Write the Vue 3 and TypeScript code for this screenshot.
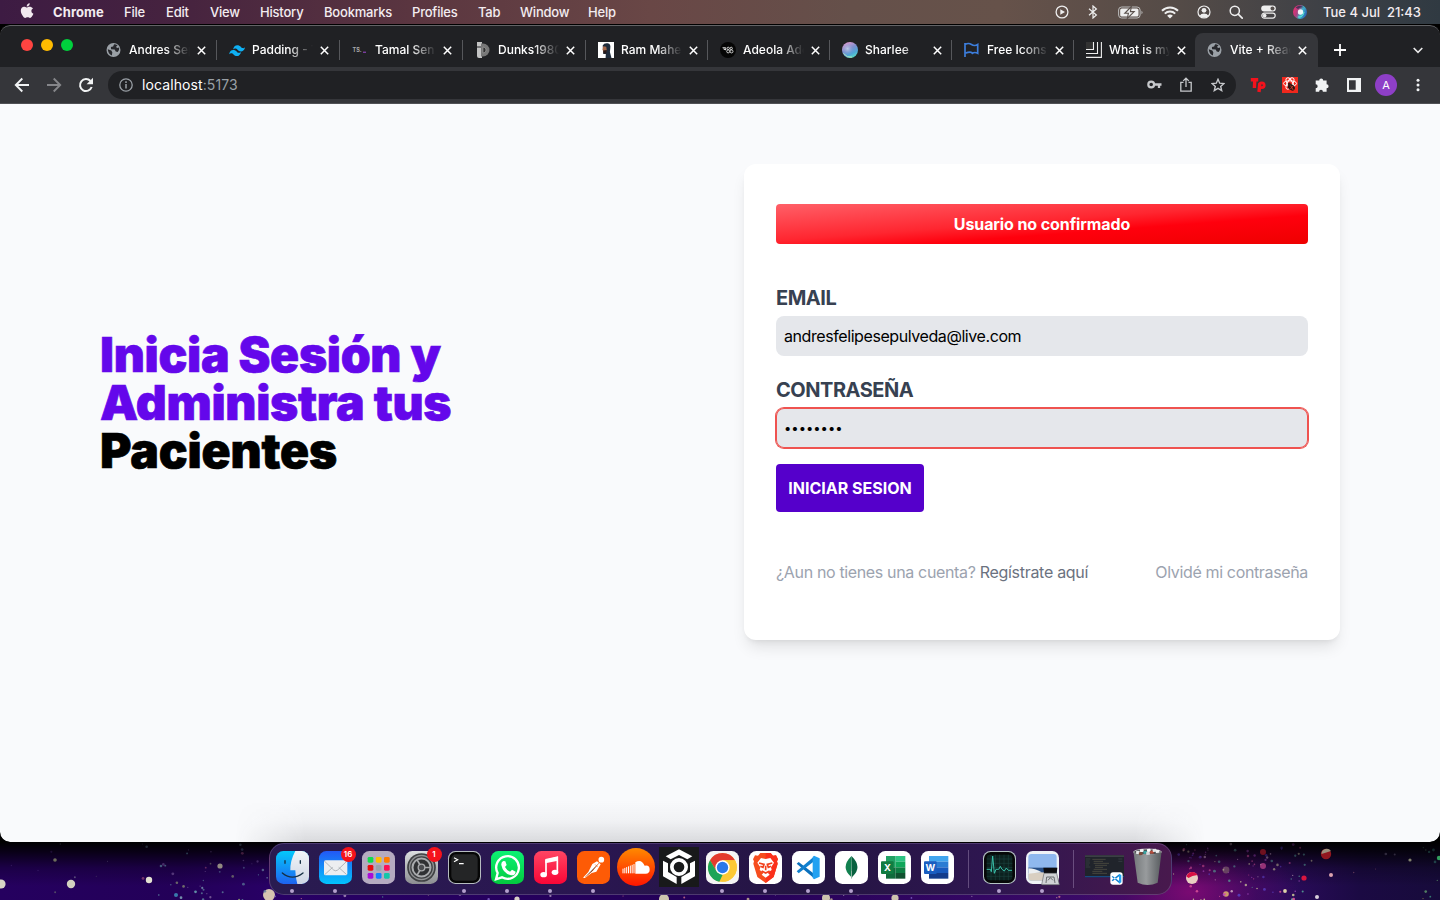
<script setup lang="ts">
import { ref } from 'vue'

interface MenuEntry { label: string; width: number }
interface BrowserTab { title: string; icon: string; width: number }
interface Speck { x: number; y: number; r: number; c: string; o: number }

const menus: MenuEntry[] = [
  { label: 'File', width: 42 },
  { label: 'Edit', width: 44 },
  { label: 'View', width: 50 },
  { label: 'History', width: 64 },
  { label: 'Bookmarks', width: 88 },
  { label: 'Profiles', width: 66 },
  { label: 'Tab', width: 42 },
  { label: 'Window', width: 68 },
  { label: 'Help', width: 40 },
]

const tabs: BrowserTab[] = [
  { title: 'Andres Sepulveda', icon: 'globe', width: 123 },
  { title: 'Padding - Tailwind', icon: 'tailwind', width: 123 },
  { title: 'Tamal Sen', icon: 'ts', width: 123 },
  { title: 'Dunks1980', icon: 'dunks', width: 123 },
  { title: 'Ram Maheshwari', icon: 'ram', width: 122 },
  { title: 'Adeola Adeoti', icon: 'adeola', width: 122 },
  { title: 'Sharlee', icon: 'orb', width: 122 },
  { title: 'Free Icons', icon: 'flag', width: 122 },
  { title: 'What is my', icon: 'lines', width: 122 },
  { title: 'Vite + React', icon: 'globe', width: 123 },
]
const activeTab = 9

const email = ref('andresfelipesepulveda@live.com')
const password = ref('12345678')

const big: Speck[] = [
  { x: 1, y: 42, r: 4.6, c: '#d8d6c6', o: 1 },
  { x: 71, y: 42, r: 4.2, c: '#d3d2c0', o: 1 },
  { x: 149, y: 38, r: 3.2, c: '#e4e2d2', o: 1 },
  { x: 269, y: 53, r: 6, c: '#d5c3b0', o: 1 },
  { x: 220, y: 24, r: 2.6, c: '#a09a88', o: 0.9 },
  { x: 55, y: 18, r: 1.8, c: '#77785f', o: 0.9 },
  { x: 176, y: 53, r: 2, c: '#3c87b5', o: 0.9 },
  { x: 1192, y: 36, r: 6, c: '#e9cfc2', o: 1 },
  { x: 1326, y: 12, r: 5.2, c: '#a11a20', o: 0.9 },
  { x: 1263, y: 10, r: 3, c: '#7a1320', o: 0.9 },
  { x: 1263, y: 24, r: 3, c: '#b03d85', o: 0.8 },
  { x: 1226, y: 28, r: 3.4, c: '#6b4a63', o: 0.9 },
  { x: 1226, y: 52, r: 2.8, c: '#d7ad6a', o: 0.9 },
  { x: 1304, y: 36, r: 2.6, c: '#d9163f', o: 1 },
  { x: 1331, y: 33, r: 2, c: '#dba3ae', o: 1 },
  { x: 1317, y: 55, r: 2, c: '#d9cfdb', o: 1 },
  { x: 1285, y: 49, r: 1.9, c: '#ddd2a8', o: 1 },
  { x: 1410, y: 18, r: 1.6, c: '#80806c', o: 1 },
  { x: 1439, y: 16, r: 2.2, c: '#2f9f5e', o: 1 },
  { x: 664, y: 57, r: 5, c: '#cdc6ae', o: 1 },
  { x: 826, y: 56, r: 4, c: '#cdc3ae', o: 1 },
  { x: 895, y: 56, r: 3.6, c: '#cdc3ae', o: 1 },
  { x: 517, y: 57, r: 2.6, c: '#d8cfc8', o: 1 },
]

let seed = 11
const rnd = (): number => {
  seed = (seed * 16807) % 2147483647
  return seed / 2147483647
}
const scatter = (n: number, x0: number, x1: number, palette: string[]): Speck[] =>
  Array.from({ length: n }, () => {
    const y = 2 + rnd() * 56
    return {
      x: x0 + rnd() * (x1 - x0),
      y,
      r: 0.5 + rnd() * 0.95,
      c: palette[Math.floor(rnd() * palette.length)],
      o: Math.min(1, 0.2 + (y / 58) * 0.7),
    }
  })
const specks: Speck[] = [
  ...big,
  ...scatter(8, 0, 135, ['#7b7892', '#5d5a6a', '#4a2a78']),
  ...scatter(45, 140, 268, ['#7fa3b8', '#5b7a99', '#8a9270', '#7a5c9a', '#a8527a', '#6fb0b8']),
  ...scatter(150, 270, 1170, ['#a58bb8', '#c06a8a', '#55a09a', '#7c5cc0', '#b8a58f']),
  ...scatter(100, 1168, 1312, ['#d7b7c9', '#e0569a', '#5bb09c', '#a84ac0', '#cfcf98', '#5a3fc0']),
  ...scatter(4, 1330, 1420, ['#7a7088', '#8e5a70']),
  ...scatter(10, 1420, 1440, ['#5f9a6a', '#8c7a4a', '#3a8a7a']),
]

const scBars = [0, 1, 2, 3, 4, 5, 6]
const padColors = ['#0fdc50', '#ffbf00', '#ff7a00', '#e90c0c', '#9ba3aa', '#fb0f55', '#a80cd8', '#1383ff', '#14c7a8']
const binScraps = [
  { x: 14, y: 8, c: '#e8e8ea' }, { x: 26, y: 3, c: '#f4f4f4' }, { x: 36, y: 9, c: '#3aa3a0' },
  { x: 47, y: 4, c: '#ffffff' }, { x: 56, y: 10, c: '#b54a3a' }, { x: 64, y: 5, c: '#e5e5e8' },
  { x: 73, y: 9, c: '#f0f0f2' }, { x: 22, y: 12, c: '#7a4a3a' }, { x: 44, y: 13, c: '#d9d9dc' },
]
</script>

<template>
  <div class="desktop">
    <header class="menubar">
      <svg class="apple" viewBox="0 0 14 16" width="14" height="16"><path fill="#f1e9ef" d="M9.7.2c.1 1-.3 1.800-.8 2.400-.6.7-1.300 1.100-2.200 1-.1-1 .3-1.800.8-2.400C8 .6 8.900.2 9.700.2zM13 5.400c-1 .6-1.600 1.500-1.600 2.600 0 1.300.8 2.400 2 2.800-.3.900-.7 1.600-1.200 2.300-.6.9-1.200 1.800-2.200 1.800-.9 0-1.200-.6-2.400-.6-1.100 0-1.500.6-2.400.6-.9 0-1.600-.8-2.200-1.700C1.900 11.900.8 9.700.8 7.700c0-2.500 1.600-3.900 3.200-3.900 1 0 1.900.7 2.500.7.600 0 1.600-.8 2.900-.8 1.500 0 2.700.6 3.600 1.700z"/></svg>
      <b class="app-name">Chrome</b>
      <nav class="menus">
        <span v-for="m in menus" :key="m.label" :style="{ width: m.width + 'px' }">{{ m.label }}</span>
      </nav>
      <div class="status">
        <svg class="play" width="14" height="14" viewBox="0 0 14 14"><circle cx="7" cy="7" r="5.900" fill="none" stroke="#eee" stroke-width="1.300"/><path d="M5.300 4.200v5.600L10 7z" fill="#eee"/></svg>
        <svg width="10" height="14" viewBox="0 0 10 14"><path d="M1 3.800l7.400 6.200L5 13V1l3.400 3L1 10.200" fill="none" stroke="#eee" stroke-width="1.200"/></svg>
        <svg class="battery" width="25" height="13" viewBox="0 0 25 13"><rect x=".6" y="1" width="21.500" height="11" rx="3" fill="none" stroke="#bbb" stroke-width="1"/><rect x="2.200" y="2.500" width="18.300" height="8" rx="1.600" fill="#eee"/><path d="M23.500 4.700v3.600q1-.6 1-1.800t-1-1.800z" fill="#bbb"/><path d="M13.400.5L6.800 7.300h3.600L9.300 12.500 16.200 5.600h-3.800z" fill="#eee" stroke="#59504c" stroke-width="1.100"/></svg>
        <svg width="18" height="13" viewBox="0 0 18 13"><path d="M1 4.700a11.500 11.500 0 0116 0M3.800 7.600a7.500 7.500 0 0110.400 0" fill="none" stroke="#eee" stroke-width="2"/><path d="M9 12.600L6.100 9.800a4.200 4.200 0 015.800 0z" fill="#eee"/></svg>
        <svg width="14" height="14" viewBox="0 0 14 14"><circle cx="7" cy="7" r="6" fill="none" stroke="#eee" stroke-width="1.200"/><circle cx="7" cy="5.300" r="2.400" fill="#eee"/><path d="M2.600 10.700Q4 8.600 7 8.600t4.400 2.100Q9.600 12.700 7 12.700t-4.400-2z" fill="#eee"/></svg>
        <svg width="14" height="14" viewBox="0 0 14 14"><circle cx="5.800" cy="5.800" r="4.600" fill="none" stroke="#eee" stroke-width="1.500"/><path d="M9.200 9.200l4 4" stroke="#eee" stroke-width="1.700" stroke-linecap="round"/></svg>
        <svg width="15" height="14" viewBox="0 0 15 14"><rect x=".2" y=".5" width="14.600" height="6" rx="3" fill="#eee"/><circle cx="11.500" cy="3.500" r="2" fill="#554f4d"/><rect x=".8" y="8.100" width="13.400" height="5" rx="2.500" fill="none" stroke="#eee" stroke-width="1.200"/><circle cx="3.600" cy="10.600" r="1.900" fill="#eee"/></svg>
        <svg class="siri" width="14" height="14" viewBox="0 0 14 14"><defs><linearGradient id="siri" x1="0" y1=".3" x2="1" y2=".7"><stop offset="0" stop-color="#f02f72"/><stop offset=".35" stop-color="#a8407f"/><stop offset=".6" stop-color="#3fb4cc"/><stop offset="1" stop-color="#2a57b0"/></linearGradient></defs><circle cx="7" cy="7" r="7" fill="url(#siri)"/><path d="M2.500 2.500Q7-.8 11 2.500q-4-.6-6 1.500z" fill="#20304c" opacity=".7"/><circle cx="7.500" cy="7" r="2.700" fill="#fff" opacity=".9"/><path d="M5 12q5 0 6-5-1 6-6 5z" fill="#59e5d3" stroke="#59e5d3" stroke-width=".7"/></svg>
      </div>
      <span class="clock">Tue 4 Jul&nbsp; 21:43</span>
    </header>

    <div class="window">
      <div class="tabstrip">
        <div class="lights"><i class="red"></i><i class="yellow"></i><i class="green"></i></div>
        <div v-for="(t, i) in tabs" :key="i" class="tab" :class="{ active: i === activeTab, divided: i < activeTab - 1 }" :style="{ width: t.width + 'px' }">
          <svg class="fav" width="16" height="16" viewBox="0 0 16 16">
            <template v-if="t.icon === 'globe'">
              <circle cx="7.500" cy="8" r="7" fill="#9aa0a6"/>
              <path d="M1.800 7.300l3.500 1.300 1 1.600-.4 3.200Q2.100 12 1.800 7.300zM8.100 2.300l-1 2.200-2.200.6.200 2.100 3.600.2 1 2.200 2 .5q1.800-2 1.500-4.500l-2.200.4-1-1.300 1.600-1.300Q10.100 2.300 8.100 2.300z" fill="#27282c"/>
            </template>
            <path v-else-if="t.icon === 'tailwind'" d="M4 7.600Q5 3.200 8.300 3.200c3.200 0 3.600 2.500 5.200 2.900 1 .2 1.900-.1 2.700-1.100-.8 3-2.400 4.400-4.200 4.400-3.200 0-3.600-2.500-5.200-2.900-1-.2-2 .1-2.800 1.100zM0 12.300q1-4.400 4.200-4.400c3.200 0 3.600 2.500 5.200 2.900 1 .2 2-.1 2.800-1.100-.8 3-2.400 4.400-4.200 4.400-3.200 0-3.600-2.500-5.200-2.900-1-.2-2 .1-2.800 1.100z" fill="#0fb0f3"/>
            <template v-else-if="t.icon === 'ts'"><text x="0.500" y="10.300" class="ts-mark">TS.</text><rect x="11" y="9.700" width="3" height="1" fill="#a04bd0"/></template>
            <template v-else-if="t.icon === 'dunks'"><path d="M2 0h5v16H4Q2 16 2 14z" fill="#c4c4c4"/><path d="M1.500 5h6" stroke="#202124"/><path d="M6 1.500h2a6.500 6.500 0 010 13H6z" fill="#777"/><path d="M8 5v6q3 0 3-3t-3-3z" fill="#333" stroke="#aaa" stroke-width=".6"/></template>
            <template v-else-if="t.icon === 'ram'"><path d="M0 0h16v16H0z" fill="#fff"/><path d="M4.700 3.500Q6 .8 9.700 1.300 13 2 12.300 6l-.4 4 1.600 6H7.600l.2-4H5.300z" fill="#202d3d"/><path d="M5.200 4.200l3 .6.600 3.500-1 2H5.600L4.500 7.600z" fill="#a66a4c"/><path d="M5.200 8.600l3.800-.5-1 3.500H5.600z" fill="#2a1c1b"/></template>
            <template v-else-if="t.icon === 'adeola'"><circle cx="8" cy="8" r="8" fill="#050505"/><path d="M2.500 5.700h3.200v2.600M4 5.700v1.800h2" fill="none" stroke="#ddd" stroke-width=".9"/><g fill="none" stroke="#ddd" stroke-width=".9"><circle cx="8.200" cy="6.400" r="1.200"/><circle cx="8.200" cy="9.400" r="1.500"/><circle cx="11.200" cy="6.400" r="1.200"/><circle cx="11.500" cy="9.400" r="1.500"/></g></template>
            <template v-else-if="t.icon === 'orb'"><defs><linearGradient id="orb" x1=".3" y1="0" x2=".8" y2="1"><stop offset="0" stop-color="#e59ad0"/><stop offset=".4" stop-color="#7d90cf"/><stop offset=".7" stop-color="#4fa6d8"/><stop offset="1" stop-color="#5ee8c0"/></linearGradient><radialGradient id="glow" cx=".35" cy=".42" r=".4"><stop offset="0" stop-color="#c3d0e8" stop-opacity=".9"/><stop offset="1" stop-color="#8090d0" stop-opacity="0"/></radialGradient></defs><circle cx="8" cy="8" r="8" fill="url(#orb)"/><circle cx="8" cy="8" r="8" fill="url(#glow)"/><path d="M1.500 11.500Q5 16 10 15.200" fill="none" stroke="#c9f3b5" stroke-width="1" opacity=".8"/></template>
            <path v-else-if="t.icon === 'flag'" d="M1 1v14M1 2.500q3.500-2 6.500 0t6.200 0v8.800q-3-1.600-5.300 0-1-2.300-7.400 0" fill="none" stroke="#3c7ddb" stroke-width="1.700"/>
            <template v-else><path d="M0 0h7v7H0z" fill="#333"/><path d="M0 7.500h7.500V0M0 11.500h11.500V0M0 15.400h15.400V0" fill="none" stroke="#eee" stroke-width="1.100"/></template>
          </svg>
          <span class="tab-title">{{ t.title }}</span>
          <svg class="close" width="9" height="9" viewBox="0 0 9 9"><path d="M.8.8l7.400 7.400M8.200.8L.8 8.200" stroke="#fff" stroke-width="1.500"/></svg>
        </div>
        <svg class="plus" width="12" height="12" viewBox="0 0 12 12"><path d="M6 0v12M0 6h12" stroke="#fff" stroke-width="1.800"/></svg>
        <svg class="chev" width="10" height="7" viewBox="0 0 10 7"><path d="M.7 1L5 5.400 9.300 1" fill="none" stroke="#e8e8e8" stroke-width="1.600"/></svg>
      </div>

      <div class="toolbar">
        <svg width="16" height="16" viewBox="0 0 16 16"><path d="M15 8H2M8.300 1.500L1.800 8l6.500 6.500" fill="none" stroke="#f1f3f4" stroke-width="1.900"/></svg>
        <svg width="16" height="16" viewBox="0 0 16 16"><path d="M1 8h13M7.700 1.500L14.200 8l-6.500 6.500" fill="none" stroke="#85868a" stroke-width="1.900"/></svg>
        <svg width="16" height="16" viewBox="0 0 16 16"><path d="M13.700 10A6 6 0 1112.500 4" fill="none" stroke="#f1f3f4" stroke-width="2"/><path d="M15 .8v6.400H8.600z" fill="#f1f3f4"/></svg>
        <div class="omnibox">
          <svg width="14" height="14" viewBox="0 0 14 14"><circle cx="7" cy="7" r="6.200" fill="none" stroke="#9aa0a6" stroke-width="1.300"/><path d="M7 6v4.500M7 3.300v1.600" stroke="#9aa0a6" stroke-width="1.500"/></svg>
          <span class="url">localhost<em>:5173</em></span>
          <svg class="key" width="15" height="10" viewBox="0 0 15 10"><circle cx="4.200" cy="4.500" r="2.900" fill="none" stroke="#c6c8cb" stroke-width="2.200"/><path d="M7.500 4.500H14.500M12 4.500v3.500" stroke="#c6c8cb" stroke-width="2.300" fill="none"/></svg>
          <svg width="12" height="15" viewBox="0 0 12 15"><path d="M3.500 5.400H.8v8.800h10.400V5.400H8.500M6 10V1.300M3.200 3.900L6 1.200l2.800 2.700" fill="none" stroke="#c6c8cb" stroke-width="1.300"/></svg>
          <svg width="14" height="14" viewBox="0 0 14 14"><path d="M7 1.300l1.700 3.900 4.200.4-3.200 2.800 1 4.200L7 10.400l-3.700 2.200 1-4.200L1.100 5.600l4.200-.4z" fill="none" stroke="#c6c8cb" stroke-width="1.400"/></svg>
        </div>
        <div class="extensions">
          <svg width="16" height="16" viewBox="0 0 16 16"><path d="M.8 2.700h7.400M4.800 2.700l-.4 8.300M9.800 6.500L9 15" fill="none" stroke="#f3121c" stroke-width="3.400"/><circle cx="11.800" cy="8.300" r="2.400" fill="none" stroke="#f3121c" stroke-width="2.800"/></svg>
          <svg width="16" height="16" viewBox="0 0 16 16"><path d="M0 0h16v16H0z" fill="#f0281d"/><g fill="none" stroke="#fff" stroke-width="1"><ellipse cx="8" cy="6.500" rx="6.600" ry="2.700"/><ellipse cx="8" cy="6.500" rx="6.200" ry="2.700" transform="rotate(60 8 6.500)"/><ellipse cx="8" cy="6.500" rx="6.200" ry="2.700" transform="rotate(120 8 6.500)"/></g><ellipse cx="9.400" cy="10.300" rx="3.800" ry="2.800" fill="#2b1512" transform="rotate(35 9.400 10.300)"/><circle cx="7.300" cy="7" r="1.500" fill="#401814"/><path d="M8.600 8.600l2.600 4.400M11 9L8.400 12" stroke="#d9402c" stroke-width=".8"/></svg>
          <svg width="16" height="16" viewBox="0 0 16 16"><path d="M1.700 3.600h3.500a2 2 0 114 0h3.400v3.600a2 2 0 110 4v3.500H8.900a1.900 1.900 0 10-3.800 0H1.700v-3.500a1.900 1.900 0 100-3.900z" fill="#f1f3f4"/></svg>
          <svg width="16" height="16" viewBox="0 0 16 16"><path d="M1 1h14v14H1zM3 3.200v9.600h6.700V3.200z" fill="#f1f3f4" fill-rule="evenodd"/></svg>
          <span class="avatar">A</span>
          <svg width="4" height="14" viewBox="0 0 4 14"><g fill="#f1f3f4"><circle cx="2" cy="2.200" r="1.500"/><circle cx="2" cy="7" r="1.500"/><circle cx="2" cy="11.800" r="1.500"/></g></svg>
        </div>
      </div>

      <main class="page">
        <h1>Inicia Sesión y Administra tus <span>Pacientes</span></h1>
        <section class="card">
          <div class="alert">Usuario no confirmado</div>
          <form @submit.prevent>
            <label for="email">EMAIL</label>
            <input id="email" v-model="email" type="email" />
            <label for="password">CONTRASEÑA</label>
            <input id="password" v-model="password" class="focused" type="password" />
            <button type="submit">INICIAR SESION</button>
          </form>
          <nav class="links">
            <span class="register">¿Aun no tienes una cuenta? <b>Regístrate aquí</b></span>
            <span class="forgot">Olvidé mi contraseña</span>
          </nav>
        </section>
      </main>
    </div>

    <div class="dock-shade"></div>

    <footer class="wallpaper">
      <svg class="stars" width="1440" height="58" viewBox="0 0 1440 58">
        <circle v-for="(s, i) in specks" :key="i" :cx="s.x" :cy="s.y" :r="s.r" :fill="s.c" :opacity="s.o"/>
        <path d="M1186.500 34.500a6 6 0 0111-1.500l-5 1-4 2z" fill="#d81245"/>
        <path d="M1321.500 12a5.200 5.200 0 019.500-3z" fill="#9c8f7c"/>
      </svg>
      <div class="dock">
        <div class="slot run">
          <svg class="ic" viewBox="0 0 99 99"><defs><linearGradient id="fa" x1="0" y1="0" x2="0" y2="1"><stop offset="0" stop-color="#04c8fb"/><stop offset="1" stop-color="#1e63f0"/></linearGradient><linearGradient id="fb" x1="0" y1="0" x2="0" y2="1"><stop offset="0" stop-color="#f2f5f8"/><stop offset="1" stop-color="#cdd5e4"/></linearGradient><clipPath id="rc"><rect width="99" height="99" rx="22"/></clipPath></defs><g clip-path="url(#rc)"><path d="M0 0h99v99H0z" fill="url(#fa)"/><path d="M58 0Q42 30 43 58h15q0 22 6 41h35V0z" fill="url(#fb)"/></g><path d="M27 29v8M73 29v8" stroke="#163044" stroke-width="4" stroke-linecap="round"/><path d="M19 66q30 25 62 0" fill="none" stroke="#163044" stroke-width="4" stroke-linecap="round"/></svg>
        </div>
        <div class="slot run">
          <svg class="ic" viewBox="0 0 99 99"><defs><linearGradient id="ml" x1="0" y1="0" x2="0" y2="1"><stop offset="0" stop-color="#2358f4"/><stop offset="1" stop-color="#02c3fd"/></linearGradient></defs><rect width="99" height="99" rx="22" fill="url(#ml)"/><rect x="15" y="28" width="70" height="45" rx="5" fill="#eceef0"/><path d="M16 30l28 27q6 5 12 0l28-27M17 71l24-22M83 71L59 49" fill="none" stroke="#a4a9ae" stroke-width="2.500"/></svg>
          <span class="badge">16</span>
        </div>
        <div class="slot">
          <svg class="ic" viewBox="0 0 99 99"><rect width="99" height="99" rx="22" fill="#b5abc0"/><rect v-for="(c, k) in padColors" :key="k" :x="17 + (k % 3) * 24.500" :y="18 + Math.floor(k / 3) * 24" width="17" height="17" rx="4" :fill="c"/></svg>
        </div>
        <div class="slot">
          <svg class="ic" viewBox="0 0 99 99"><defs><linearGradient id="st" x1="0" y1="0" x2="0" y2="1"><stop offset="0" stop-color="#dcdfe0"/><stop offset="1" stop-color="#8c8e91"/></linearGradient></defs><rect width="99" height="99" rx="22" fill="url(#st)"/><circle cx="49.500" cy="49.500" r="43" fill="#3f4143"/><circle cx="49.500" cy="49.500" r="36" fill="none" stroke="#8f9193" stroke-width="4"/><circle cx="49.500" cy="49.500" r="27" fill="#2f3133" stroke="#a9abad" stroke-width="6"/><path d="M49.500 49.500h27M49.500 49.500L36 26M49.500 49.500L36 73" stroke="#a9abad" stroke-width="5"/><circle cx="49.500" cy="49.500" r="10" fill="#4b4d50" stroke="#a9abad" stroke-width="4"/></svg>
          <span class="badge">1</span>
        </div>
        <div class="slot run">
          <svg class="ic" viewBox="0 0 99 99"><rect width="99" height="99" rx="22" fill="#b6bcc0"/><rect x="3" y="3" width="93" height="93" rx="20" fill="#060606"/><rect x="10" y="10" width="79" height="79" rx="14" fill="#242526"/><path d="M18 20l11 6-11 6M33 38h14" fill="none" stroke="#fff" stroke-width="3.500"/></svg>
        </div>
        <div class="slot run">
          <svg class="ic" viewBox="0 0 99 99"><defs><linearGradient id="wa" x1="0" y1="0" x2="0" y2="1"><stop offset="0" stop-color="#0df274"/><stop offset="1" stop-color="#03c93e"/></linearGradient></defs><rect width="99" height="99" rx="22" fill="url(#wa)"/><path d="M15 85l5-19a34 34 0 1113 13z" fill="none" stroke="#fff" stroke-width="7"/><path d="M37 30l6 1 4 11-5 6q5 10 15 14l6-6 11 6q-1 12-14 11Q36 67 31 42q-1-9 6-12z" fill="#fff"/></svg>
        </div>
        <div class="slot run">
          <svg class="ic" viewBox="0 0 99 99"><defs><linearGradient id="mu" x1="0" y1="0" x2="0" y2="1"><stop offset="0" stop-color="#ff4563"/><stop offset="1" stop-color="#f90636"/></linearGradient></defs><rect width="99" height="99" rx="22" fill="url(#mu)"/><path d="M36 70V28l34-8v43" fill="none" stroke="#fff" stroke-width="5"/><path d="M34 24l38-8v13l-38 8z" fill="#fff"/><ellipse cx="29" cy="71" rx="10" ry="8" fill="#fff"/><ellipse cx="63" cy="64" rx="10" ry="8" fill="#fff"/></svg>
        </div>
        <div class="slot run">
          <svg class="ic" viewBox="0 0 99 99"><rect width="99" height="99" rx="22" fill="#fd5b06"/><circle cx="73" cy="26" r="8.500" fill="#fff"/><path d="M60 31l11 9-13 22-14 4-20 15-6-1 16-17 12-24z" fill="#fff"/><path d="M66 36L46 60 24 79M54 40l8 8" stroke="#fd5b06" stroke-width="1.800"/></svg>
        </div>
        <div class="slot">
          <svg class="ic wide" viewBox="0 0 114 114"><defs><linearGradient id="sc" x1="0" y1="0" x2="0" y2="1"><stop offset="0" stop-color="#ff8a00"/><stop offset="1" stop-color="#ff1500"/></linearGradient></defs><circle cx="57" cy="57" r="57" fill="url(#sc)"/><path d="M55 77V43q18-12 28 10 15-3 15 12 0 11-12 12z" fill="#fff"/><path v-for="b in scBars" :key="b" :d="`M${18 + b * 5.500} ${62 - b * 2.300}V76`" stroke="#fff" stroke-width="3"/></svg>
        </div>
        <div class="slot">
          <svg class="ic box" viewBox="0 0 120 120"><path d="M0 0h120v120H0z" fill="#18191a"/><path d="M60 7l40 21-15 9-25-13-25 13-15-9zM12 41l15 8v26l26 15v21L12 88zM108 41l-15 8v26L67 90v21l41-23z" fill="#fff"/><circle cx="60" cy="60" r="21.500" fill="none" stroke="#fff" stroke-width="11"/></svg>
        </div>
        <div class="slot run">
          <svg class="ic" viewBox="0 0 99 99"><rect width="99" height="99" rx="22" fill="#f5f5f5"/><circle cx="49.500" cy="49.500" r="43" fill="#fcc934"/><path d="M12 28a43 43 0 0175 0H49.500L31 60z" fill="#e33b2e"/><path d="M12 28l21 35 17 8-10 21.500A43 43 0 0112 28z" fill="#1da457"/><path d="M49.500 28h38q10 20 0 42Q75 92 46 92.500L68 60z" fill="#fcc934"/><circle cx="49.500" cy="49.500" r="21.500" fill="#fff"/><circle cx="49.500" cy="49.500" r="17" fill="#2a78ea"/></svg>
        </div>
        <div class="slot run">
          <svg class="ic" viewBox="0 0 99 99"><rect width="99" height="99" rx="22" fill="#fff"/><path d="M34 6h31l7 8 9-1 6 12-3 6 2 7-12 40-24 18-25-18-12-40 2-7-3-6 6-12 9 1z" fill="#f64d1e"/><path d="M50 6h15l7 8 9-1 6 12-3 6 2 7-12 40-24 18z" fill="#fb301b"/><path d="M36 21l14 3 14-3 11 14-9 14 2 8-12 8 6 6-12 9-12-9 6-6-12-8 2-8-9-14z" fill="#fff"/><path d="M30 36l15 4-3 9-8-3M70 36l-15 4 3 9 8-3M50 44v14M38 60l12 6 12-6" stroke="#f2401d" stroke-width="5" fill="none"/></svg>
        </div>
        <div class="slot run">
          <svg class="ic" viewBox="0 0 99 99"><rect width="99" height="99" rx="22" fill="#fff"/><path d="M14 38l6-5 48 37v13z" fill="#0a70bd"/><path d="M14 61l6 6 48-38V15z" fill="#1180cf"/><path d="M66 14l17 8v55l-17 8-4-4V18z" fill="#22a1f1"/></svg>
        </div>
        <div class="slot run">
          <svg class="ic" viewBox="0 0 99 99"><rect width="99" height="99" rx="22" fill="#fff"/><path d="M49.500 15Q15 49 48 77l1 6z" fill="#11804f"/><path d="M49.500 15Q84 49 52 77l-2 6z" fill="#08613f"/><path d="M49.500 60v23" stroke="#9fb8aa" stroke-width="2"/></svg>
        </div>
        <div class="slot">
          <svg class="ic" viewBox="0 0 99 99"><rect width="99" height="99" rx="22" fill="#fff"/><path d="M24 15h29v34H24z" fill="#21a164"/><path d="M53 15h29v17H53z" fill="#2dc382"/><path d="M53 32h29v17H53z" fill="#0fa65a"/><path d="M24 49h29v34H24z" fill="#116b3c"/><path d="M53 49h29v17H53z" fill="#0e7d43"/><path d="M53 66h29v17H53z" fill="#10522f"/><rect x="9" y="31" width="38" height="38" rx="3" fill="#107c41"/><text x="28" y="60" class="office">X</text></svg>
        </div>
        <div class="slot">
          <svg class="ic" viewBox="0 0 99 99"><rect width="99" height="99" rx="22" fill="#fff"/><path d="M24 15h58v17H24z" fill="#41a5ee"/><path d="M24 32h58v17H24z" fill="#2b7cd3"/><path d="M24 49h58v17H24z" fill="#185abd"/><path d="M24 66h58v17H24z" fill="#133c8b"/><rect x="9" y="31" width="38" height="38" rx="3" fill="#1a5ec0"/><text x="28" y="60" class="office">W</text></svg>
        </div>
        <div class="rule"></div>
        <div class="slot run">
          <svg class="ic" viewBox="0 0 99 99"><rect width="99" height="99" rx="22" fill="#b4c2c4"/><rect x="3" y="3" width="93" height="93" rx="20" fill="#060808"/><rect x="11" y="11" width="77" height="77" rx="10" fill="#0c211f"/><path d="M24 11v77M37 11v77M50 11v77M63 11v77M76 11v77M11 24h77M11 37h77M11 50h77M11 63h77M11 76h77" stroke="#1f4a45" stroke-width="1.500"/><path d="M11 55h11l3 7 4-47 5 52 5-12h8l5-9 5 9 7 5 6-9 6 7h11" fill="none" stroke="#3bc9b1" stroke-width="2.800"/></svg>
        </div>
        <div class="slot run">
          <svg class="ic spill" viewBox="0 0 99 99"><rect width="99" height="99" rx="20" fill="#eff2f6"/><rect x="7" y="9" width="85" height="80" rx="9" fill="#8fb8ee"/><path d="M7 50h85v18H7z" fill="#284f86"/><path d="M7 66q30-5 85 2v13q0 8-9 8H16q-9 0-9-8z" fill="#d9cfc1"/><path d="M7 52q20 0 40 12L7 68z" fill="#eceff1"/><path d="M52 50h42l-2 17H54z" fill="#0c0d10"/><path d="M54 67h38l8 34H47z" fill="#d0d3d5" stroke="#686d70" stroke-width="2"/><path d="M60 96l2-18h22l3 18M66 88l7-8 8 8" stroke="#55595c" stroke-width="2.500" fill="none"/></svg>
        </div>
        <div class="rule"></div>
        <div class="slot">
          <svg class="thumb" viewBox="0 0 117 90"><path d="M0 1h117v66H0z" fill="#20242b"/><path d="M0 1h117v5H0z" fill="#3b3f45"/><path d="M0 63h117v4H0z" fill="#174a80"/><path d="M22 13h40M26 19h28M26 25h46M30 31h36M30 37h24M26 43h40M22 49h30M22 55h44" stroke="#5b5847" stroke-width="2"/><path d="M2 12h14M2 18h12M2 24h13M2 30h10M2 36h14M100 12h12M100 19h12" stroke="#3f454d" stroke-width="2"/><rect x="76" y="52" width="37" height="37" rx="8" fill="#fff"/><path d="M80 65l3-2 20 16v6zM80 76l3 3 20-16v-6z" fill="#1180cf"/><path d="M102 56l7 4v22l-7 4z" fill="#22a1f1"/></svg>
        </div>
        <div class="slot">
          <svg class="bin" viewBox="0 0 87 114"><defs><linearGradient id="bn" x1="0" y1="0" x2="1" y2="0"><stop offset="0" stop-color="#74787a"/><stop offset=".45" stop-color="#989b9d"/><stop offset="1" stop-color="#585c5f"/></linearGradient></defs><ellipse cx="43.500" cy="12" rx="42" ry="9" fill="#4d5052" stroke="#c9cccd" stroke-width="2.500"/><path d="M1.500 13q42 16 84 0L74 104q-30 14-60 0z" fill="url(#bn)"/><rect v-for="(p, k) in binScraps" :key="k" :x="p.x - 5" :y="p.y - 1" width="11" height="9" rx="2" :fill="p.c" transform="rotate(-4 43 8)"/></svg>
        </div>
      </div>
    </footer>
  </div>
</template>

<style>
html, body { margin: 0; background: #05010f; overflow: hidden; }
</style>

<style scoped>
.desktop {
  width: 1440px;
  height: 900px;
  overflow: hidden;
  position: relative;
  display: flex;
  flex-direction: column;
  background: #000;
  font-family: Inter, "Liberation Sans", sans-serif;
}
.desktop * { box-sizing: border-box; }
svg { display: block; flex: none; }

.menubar {
  height: 24px;
  flex: none;
  display: flex;
  align-items: center;
  padding-bottom: 1px;
  color: #f3ecf0;
  font-size: 13px;
  font-weight: 500;
  white-space: nowrap;
  background: linear-gradient(90deg, #3d1b43 0, #46233f 180px, #5b3640 420px, #694746 650px, #65504a 850px, #66524a 1000px, #544b47 1180px, #3d4046 1330px, #303a42 1440px);
}
.apple { margin: -1px 19px 0 20px; width: 14px; }
.app-name { width: 71px; font-weight: 700; letter-spacing: 0.1px; }
.menus { display: flex; letter-spacing: -0.2px; }
.status { display: flex; align-items: center; margin-left: auto; gap: 18px; padding-top: 1px; }
.play { margin-right: 1px; }
.battery { margin-left: 2px; }
.siri { margin-left: -1px; }
.clock { width: 99px; margin: 0 18px 0 16px; font-size: 13px; }

.window {
  height: 818px;
  flex: none;
  display: flex;
  flex-direction: column;
  border-radius: 10px;
  overflow: hidden;
  background: #202124;
  border-top: 1px solid #000;
}
.tabstrip {
  height: 42px;
  flex: none;
  display: flex;
  align-items: flex-start;
  border-top: 1px solid #626366;
  border-radius: 10px 10px 0 0;
  padding-top: 7px;
}
.lights { display: flex; gap: 8px; width: 73px; margin: 6px 0 0 21px; flex: none; }
.lights i { width: 12px; height: 12px; border-radius: 50%; }
.red { background: #ff4441; }
.yellow { background: #ffbb00; }
.green { background: #00d13d; }
.tab {
  height: 34px;
  flex: none;
  display: flex;
  align-items: center;
  padding: 0 0 0 12px;
  position: relative;
  border-radius: 8px 8px 0 0;
}
.tab.divided::after {
  content: "";
  position: absolute;
  right: 0;
  top: 7px;
  width: 1px;
  height: 20px;
  background: #56575b;
}
.tab.active { background: #35363a; margin-left: -1px; }
.tab-title {
  width: 61px;
  margin-left: 7px;
  overflow: hidden;
  white-space: nowrap;
  font-size: 12px;
  font-weight: 500;
  line-height: 18px;
  color: #fff;
  -webkit-mask-image: linear-gradient(90deg, #000 36px, transparent 61px);
  mask-image: linear-gradient(90deg, #000 36px, transparent 61px);
}
.close { margin-left: 6.500px; }
.ts-mark { font: 700 5.500px Inter, sans-serif; fill: #aaa; }
.plus { margin: 11px 0 0 16px; }
.chev { margin: 14px 17px 0 auto; }

.toolbar {
  height: 37px;
  flex: none;
  display: flex;
  align-items: center;
  gap: 16px;
  padding: 0 20px 1px 14px;
  background: #35363a;
  border-bottom: 1px solid #505155;
}
.omnibox {
  width: 1128px;
  height: 28px;
  flex: none;
  margin-left: -2px;
  border-radius: 14px;
  background: #202124;
  display: flex;
  align-items: center;
  padding: 0 11px;
  gap: 19px;
}
.url { margin-left: -10px; margin-right: auto; font-size: 14px; line-height: 20px; color: #fff; letter-spacing: 0.1px; }
.url em { font-style: normal; color: #9aa0a6; }
.key { margin-right: -0.500px; }
.extensions { display: flex; align-items: center; gap: 16px; margin-left: -2px; }
.avatar {
  width: 22px;
  height: 22px;
  flex: none;
  margin: 0 -3px;
  border-radius: 50%;
  background: #8e3fc7;
  color: #fff;
  font-size: 11px;
  line-height: 22px;
  text-align: center;
}
.extensions > :last-child { margin-left: 6px; }

.page {
  height: 738px;
  flex: none;
  display: flex;
  align-items: flex-start;
  justify-content: space-between;
  padding: 60px 100px 0;
  background: #f9fafc;
  border-radius: 0 0 10px 10px;
}
h1 {
  width: 400px;
  margin: 167px 0 0;
  font-size: 48px;
  line-height: 48px;
  font-weight: 900;
  letter-spacing: -0.320px;
  -webkit-text-stroke: 0.700px currentColor;
  color: #6407eb;
}
h1 span { display: block; color: #000; letter-spacing: -0.150px; }
.card {
  width: 596px;
  height: 476px;
  padding: 40px 32px;
  border-radius: 12px;
  background: #fff;
  box-shadow: 0 10px 15px -3px rgba(0, 0, 0, 0.1), 0 4px 6px -4px rgba(0, 0, 0, 0.1);
}
.alert {
  height: 40px;
  border-radius: 4px;
  background: linear-gradient(to bottom right, #ff6068 0%, #ff2630 46%, #ff000d 64%, #ee0000 100%);
  color: #fff;
  font-weight: 700;
  font-size: 16px;
  letter-spacing: -0.100px;
  line-height: 40px;
  text-align: center;
}
form { display: flex; flex-direction: column; align-items: flex-start; margin-top: 40px; }
label { font-size: 20px; font-weight: 700; line-height: 28px; letter-spacing: -0.480px; color: #374151; }
input {
  width: 532px;
  height: 40px;
  margin: 4px 0 20px;
  padding: 8px;
  border: 0;
  border-radius: 8px;
  outline: none;
  background: #e5e7eb;
  color: #000;
  font: 400 16px/24px Inter, sans-serif;
  letter-spacing: -0.420px;
}
input.focused { margin-bottom: 16px; font-size: 13px; letter-spacing: 0; box-shadow: 0 0 0 1px #ef5350, inset 0 0 0 1px #ef5350; }
button {
  width: 148px;
  height: 48px;
  padding: 0;
  border: 0;
  border-radius: 4px;
  background: #5500cb;
  color: #fff;
  font: 700 16px/24px Inter, sans-serif;
  white-space: nowrap;
}
.links { display: flex; justify-content: space-between; margin-top: 48px; font-size: 16px; line-height: 24px; letter-spacing: -0.350px; color: #9ca3af; white-space: nowrap; }
.links b { font-weight: 400; letter-spacing: -0.290px; color: #6b7280; }

.dock-shade {
  position: absolute;
  left: 235px;
  top: 800px;
  width: 970px;
  height: 42px;
  background: linear-gradient(180deg, rgba(40, 40, 48, 0) 0, rgba(40, 40, 48, 0.04) 50%, rgba(40, 40, 48, 0.15) 100%);
  -webkit-mask-image: linear-gradient(90deg, transparent, #000 70px, #000 900px, transparent);
  mask-image: linear-gradient(90deg, transparent, #000 70px, #000 900px, transparent);
}

.wallpaper {
  height: 58px;
  flex: none;
  position: relative;
  display: flex;
  justify-content: center;
  align-items: flex-start;
  background:
    linear-gradient(180deg, #000 0, rgba(0, 0, 0, 0.75) 10px, rgba(0, 0, 0, 0.25) 26px, rgba(0, 0, 0, 0) 44px),
    radial-gradient(ellipse 110px 70px at 1190px 50px, #7a0a72, rgba(80, 8, 100, 0.55) 60%, rgba(40, 8, 80, 0)),
    linear-gradient(90deg, #25005f 0, #230058 180px, #280065 270px, #230057 700px, #3b0a68 1100px, #2b0b5c 1280px, #1b0a43 1360px, #170b3b 1440px);
}
.stars { position: absolute; left: 0; top: 0; }
.dock {
  position: relative;
  width: 903px;
  height: 52px;
  margin-top: 1px;
  display: flex;
  padding-left: 1px;
  border: 1px solid rgba(150, 125, 180, 0.35);
  border-radius: 15px;
  background: linear-gradient(90deg, #291b50 0, #2a1651 35%, #241542 60%, #2e1650 80%, #48194d 100%);
}
.slot { width: 43px; height: 50px; flex: none; display: flex; justify-content: center; align-items: flex-start; position: relative; }
.ic { width: 33px; height: 33px; margin-top: 7px; overflow: visible; }
.ic.wide { width: 38px; height: 38px; margin-top: 4px; }
.ic.box { width: 40px; height: 40px; margin-top: 3px; }
.thumb { width: 39px; height: 30px; margin-top: 11px; }
.bin { width: 29px; height: 38px; margin-top: 4px; }
.slot.run::after {
  content: "";
  position: absolute;
  left: 19.500px;
  top: 45px;
  width: 4px;
  height: 4px;
  border-radius: 50%;
  background: #b4a0cd;
}
.badge {
  position: absolute;
  right: 1px;
  top: 3px;
  width: 15px;
  height: 15px;
  border-radius: 50%;
  background: #f5121b;
  color: #fff;
  font-size: 8px;
  font-weight: 600;
  line-height: 15px;
  text-align: center;
}
.rule { width: 1px; height: 38px; margin: 6px 9px 0; background: rgba(180, 160, 200, 0.4); flex: none; }
.office { font: 700 28px Inter, sans-serif; fill: #fff; text-anchor: middle; }
</style>
